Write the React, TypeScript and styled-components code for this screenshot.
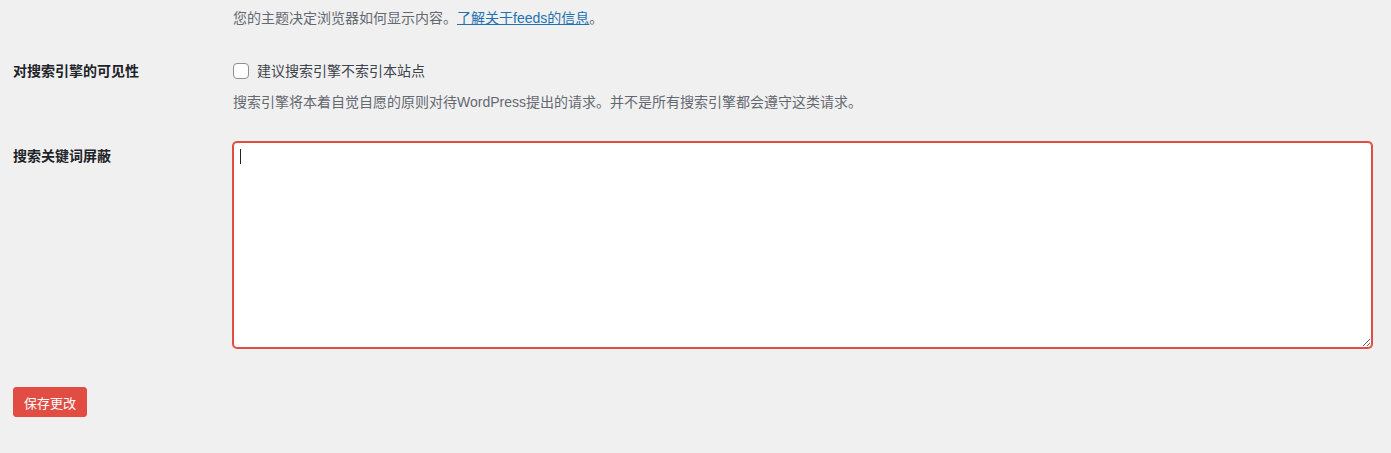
import styled, { createGlobalStyle } from "styled-components";

const GlobalStyle = createGlobalStyle`
  html, body {
    margin: 0;
    padding: 0;
    background: #f0f0f1;
  }
  body {
    font-family: "Liberation Sans", "Noto Sans CJK SC", sans-serif;
    font-size: 14px;
    color: #3c434a;
  }
`;

function App() {
  return (
    <Wrap>
      <GlobalStyle />
      <FormTable>
        <Row>
          <Head />
          <Cell $top={9}>
            <Description>
              您的主题决定浏览器如何显示内容。<Link href="#">了解关于feeds的信息</Link>。
            </Description>
          </Cell>
        </Row>
        <Row>
          <Head>对搜索引擎的可见性</Head>
          <Cell $top={20} $bottom={16}>
            <CheckLabel>
              <CheckBox type="checkbox" />
              建议搜索引擎不索引本站点
            </CheckLabel>
            <Description $gap={13}>
              搜索引擎将本着自觉自愿的原则对待WordPress提出的请求。并不是所有搜索引擎都会遵守这类请求。
            </Description>
          </Cell>
        </Row>
        <Row>
          <Head>搜索关键词屏蔽</Head>
          <Cell $top={15}>
            <AreaBox>
              <KeywordArea autoFocus />
              <Caret />
            </AreaBox>
          </Cell>
        </Row>
      </FormTable>
      <Submit>
        <SaveButton type="button">保存更改</SaveButton>
      </Submit>
    </Wrap>
  );
}

export default App;

const Wrap = styled.div`
  padding: 0 19px 0 13px;
  min-height: 453px;
  box-sizing: border-box;
`;

const FormTable = styled.div`
  display: flex;
  flex-direction: column;
`;

const Row = styled.div`
  display: flex;
  flex-direction: row;
`;

const Head = styled.div`
  width: 210px;
  flex-shrink: 0;
  padding: 20px 10px 15px 0;
  box-sizing: border-box;
  font-weight: 700;
  color: #1d2327;
  line-height: 18px;
`;

const Cell = styled.div<{ $top: number; $bottom?: number }>`
  flex: 1;
  padding: ${(p) => p.$top}px 0 ${(p) => p.$bottom ?? 15}px 10px;
  line-height: 18px;
`;

const Description = styled.p<{ $gap?: number }>`
  margin: ${(p) => p.$gap ?? 0}px 0 0;
  color: #646970;
  font-size: 14px;
  line-height: 18px;
`;

const Link = styled.a`
  color: #2271b1;
  text-decoration: underline;
`;

const CheckLabel = styled.label`
  display: flex;
  align-items: center;
  height: 18px;
  gap: 8px;
  color: #3c434a;
`;

const CheckBox = styled.input`
  appearance: none;
  margin: 0;
  width: 16px;
  height: 16px;
  border: 1px solid #8c8f94;
  border-radius: 4px;
  background: #fff;
  box-sizing: border-box;
`;

const AreaBox = styled.div`
  position: relative;
`;

const KeywordArea = styled.textarea`
  display: block;
  width: 100%;
  height: 206px;
  box-sizing: border-box;
  border: 1px solid #e14d43;
  box-shadow: 0 0 0 1px #e14d43;
  border-radius: 4px;
  margin: 0;
  padding: 6px 7px;
  font-family: "Liberation Sans", "Noto Sans CJK SC", sans-serif;
  font-size: 14px;
  color: #2c3338;
  background: #fff;
  outline: none;
  resize: vertical;
  caret-color: transparent;
`;

/* the blinking text cursor seen in the focused field */
const Caret = styled.span`
  position: absolute;
  left: 7px;
  top: 7px;
  width: 1px;
  height: 15px;
  background: #1d2327;
  pointer-events: none;
`;

const Submit = styled.div`
  padding-top: 24px;
`;

const SaveButton = styled.button`
  height: 30px;
  padding: 0 10px;
  border: 1px solid #e14d43;
  border-radius: 3px;
  background: #e14d43;
  color: #fff;
  font-family: "Liberation Sans", "Noto Sans CJK SC", sans-serif;
  font-size: 13px;
  cursor: pointer;
`;
